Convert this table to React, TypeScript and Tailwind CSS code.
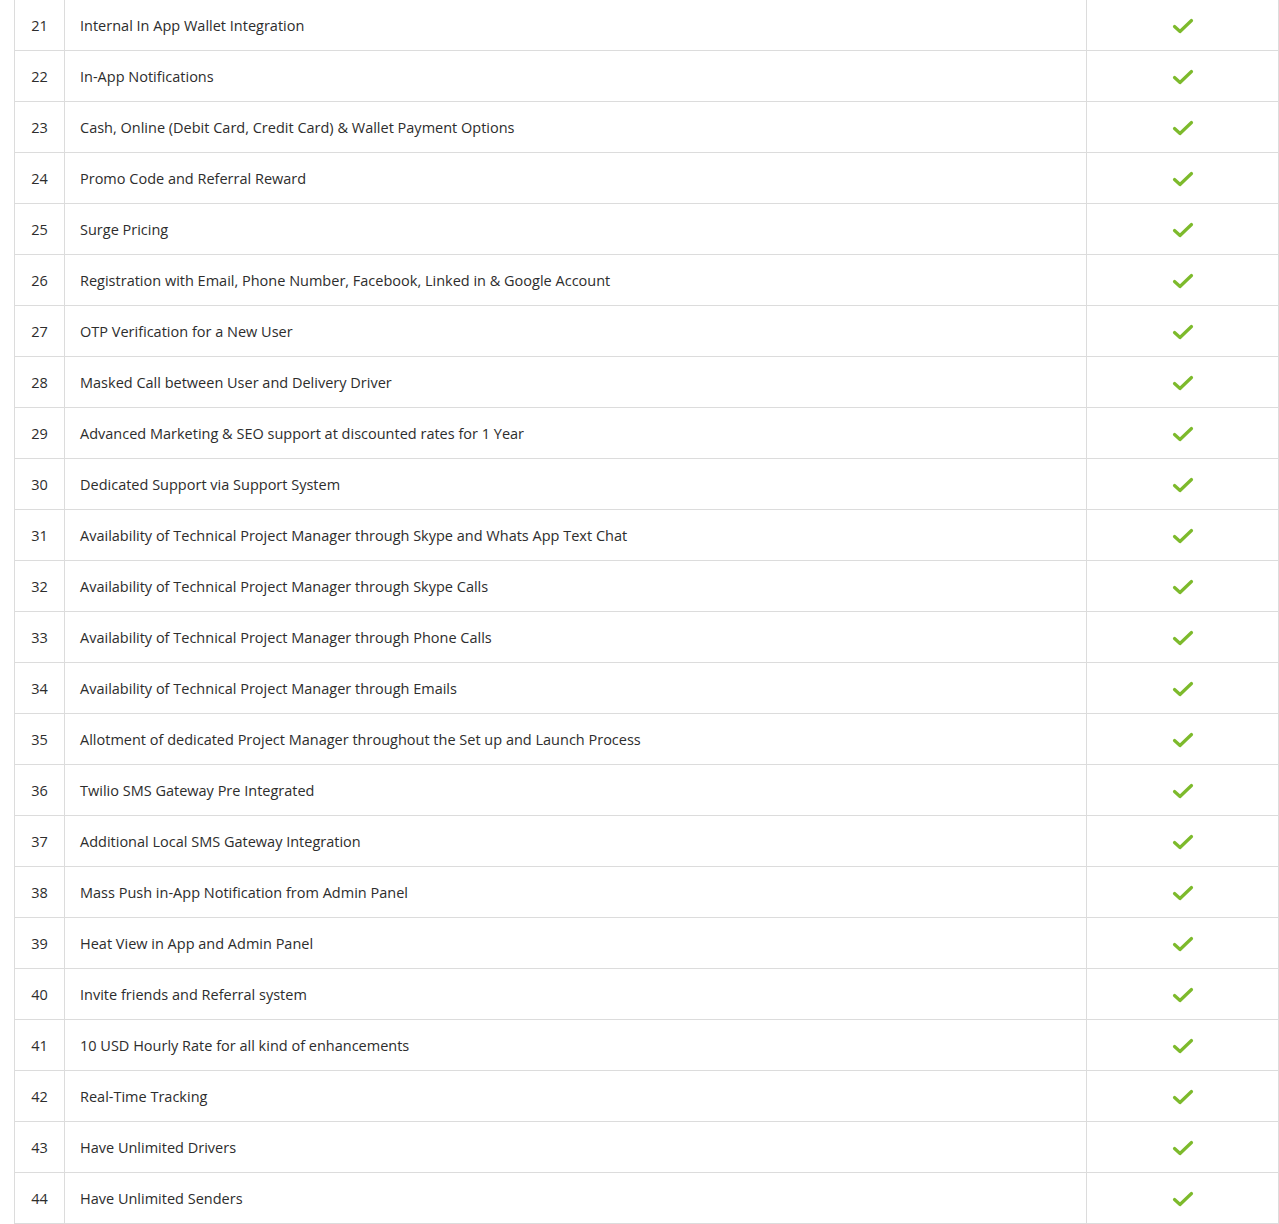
const features = [
  'Internal In App Wallet Integration',
  'In-App Notifications',
  'Cash, Online (Debit Card, Credit Card) & Wallet Payment Options',
  'Promo Code and Referral Reward',
  'Surge Pricing',
  'Registration with Email, Phone Number, Facebook, Linked in & Google Account',
  'OTP Verification for a New User',
  'Masked Call between User and Delivery Driver',
  'Advanced Marketing & SEO support at discounted rates for 1 Year',
  'Dedicated Support via Support System',
  'Availability of Technical Project Manager through Skype and Whats App Text Chat',
  'Availability of Technical Project Manager through Skype Calls',
  'Availability of Technical Project Manager through Phone Calls',
  'Availability of Technical Project Manager through Emails',
  'Allotment of dedicated Project Manager throughout the Set up and Launch Process',
  'Twilio SMS Gateway Pre Integrated',
  'Additional Local SMS Gateway Integration',
  'Mass Push in-App Notification from Admin Panel',
  'Heat View in App and Admin Panel',
  'Invite friends and Referral system',
  '10 USD Hourly Rate for all kind of enhancements',
  'Real-Time Tracking',
  'Have Unlimited Drivers',
  'Have Unlimited Senders',
];

function Check() {
  return (
    <svg width="22" height="16" viewBox="0 0 22 16" fill="none">
      <path
        d="M2.5 8.5 L8 13.5 L19.5 2.5"
        stroke="#7dba2c"
        strokeWidth="3.2"
        strokeLinecap="round"
        strokeLinejoin="round"
      />
    </svg>
  );
}

export default function App() {
  return (
    <div className="min-h-screen bg-white pl-[14px] font-['Open_Sans',sans-serif] text-[14.5px] text-[#2d2d2d]">
      <div className="border-x border-[#dcdcdc]">
        {features.map((f, i) => (
          <div key={i} className="flex h-[51px] border-b border-[#dcdcdc]">
            <div className="flex w-[50px] shrink-0 items-center justify-center border-r border-[#dcdcdc] pt-[2px]">
              {21 + i}
            </div>
            <div className="flex w-[1022px] shrink-0 items-center border-r border-[#dcdcdc] pl-[15px] pt-[2px]">
              {f}
            </div>
            <div className="flex flex-1 items-center justify-center pt-[2px]">
              <Check />
            </div>
          </div>
        ))}
      </div>
    </div>
  );
}
